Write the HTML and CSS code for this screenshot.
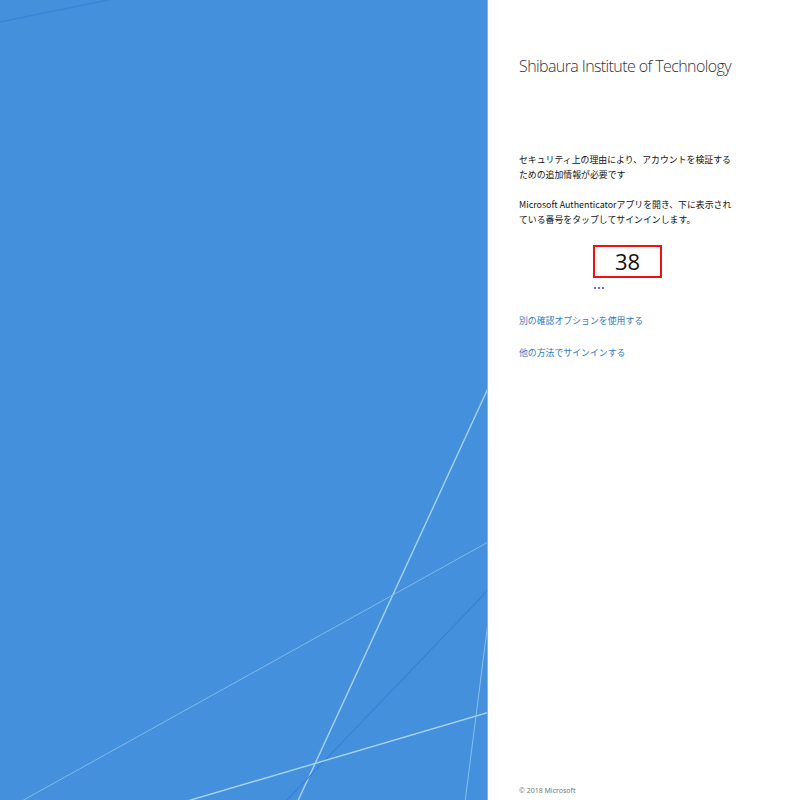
FILE: index.html
```html
<!DOCTYPE html>
<html lang="ja">
<head>
<meta charset="utf-8">
<title>サインイン</title>
<link rel="stylesheet" href="styles.css">
</head>
<body>
<div class="page">
  <div class="bg">
    <svg class="bg-art" width="488" height="800" viewBox="0 0 488 800" aria-hidden="true">
      <line x1="0" y1="22" x2="108" y2="0" stroke="#3a83d7" stroke-width="1.5"/>
      <line x1="490" y1="384" x2="296" y2="805" stroke="#a3d3f1" stroke-width="1.4"/>
      <line x1="490" y1="541" x2="20" y2="802" stroke="#7fb9e9" stroke-width="1"/>
      <line x1="490" y1="588" x2="285" y2="802" stroke="#3681d6" stroke-width="1.2"/>
      <line x1="490" y1="712" x2="184" y2="802" stroke="#a6d5f2" stroke-width="1.4"/>
      <line x1="488" y1="622" x2="465" y2="802" stroke="#86c0ec" stroke-width="1"/>
      <line x1="487.5" y1="0" x2="487.5" y2="800" stroke="#7db6e8" stroke-width="1"/>
    </svg>
  </div>
  <div class="panel">
    <div class="org">Shibaura Institute of Technology</div>
    <p class="msg first">セキュリティ上の理由により、アカウントを検証する<br>ための追加情報が必要です</p>
    <p class="msg">Microsoft Authenticatorアプリを開き、下に表示され<br>ている番号をタップしてサインインします。</p>
    <div class="code-wrap">
      <div class="code">38</div>
      <div class="dots"><span></span><span></span><span></span></div>
    </div>
    <a class="link first-link" href="#">別の確認オプションを使用する</a>
    <a class="link" href="#">他の方法でサインインする</a>
    <div class="spacer"></div>
    <div class="footer">© 2018 Microsoft</div>
  </div>
</div>
</body>
</html>
```
FILE: styles.css
```css
html, body {
  margin: 0;
  padding: 0;
  background: #ffffff;
}
.page {
  display: flex;
  width: 797px;
  height: 800px;
  overflow: hidden;
}
.bg {
  flex: 0 0 488px;
  height: 800px;
  background: #4490dd;
}
.bg-art {
  display: block;
}
.panel {
  flex: 1 1 auto;
  display: flex;
  flex-direction: column;
  align-items: flex-start;
  padding: 55px 31px 0 31px;
  font-family: "Segoe UI", "Noto Sans", "Noto Sans CJK JP", sans-serif;
  color: #1b1b1b;
}
.org {
  font-family: "Segoe UI Light", "Open Sans", "Noto Sans", sans-serif;
  font-weight: 300;
  font-size: 16px;
  line-height: 22px;
  color: #333333;
  letter-spacing: -0.6px;
}
.msg {
  margin: 0;
  font-family: "Noto Sans CJK JP", sans-serif;
  font-size: 8.9px;
  line-height: 14.5px;
  color: #111111;
}
.msg.first {
  margin-top: 76px;
}
.msg + .msg {
  margin-top: 16px;
}
.code-wrap {
  margin-top: 18px;
  margin-left: 74px;
  display: flex;
  flex-direction: column;
  align-items: flex-start;
}
.code {
  box-sizing: border-box;
  width: 69px;
  height: 33px;
  border: 2px solid #ee1111;
  font-family: "Open Sans", "Noto Sans", sans-serif;
  font-size: 22px;
  line-height: 29px;
  text-align: center;
  color: #111111;
}
.dots {
  display: flex;
  gap: 2px;
  margin-top: 9px;
  margin-left: 1px;
}
.dots span {
  width: 2px;
  height: 2px;
  background: #6d6df0;
}
.link {
  font-family: "Noto Sans CJK JP", sans-serif;
  font-size: 8.9px;
  line-height: 14px;
  color: #2f7ac4;
  text-decoration: none;
}
.first-link {
  margin-top: 25px;
}
.link + .link {
  margin-top: 18px;
}
.spacer {
  flex: 1 1 auto;
}
.footer {
  font-family: "Noto Sans", sans-serif;
  font-size: 7px;
  line-height: 10px;
  color: #777777;
  margin-bottom: 4px;
}
```
